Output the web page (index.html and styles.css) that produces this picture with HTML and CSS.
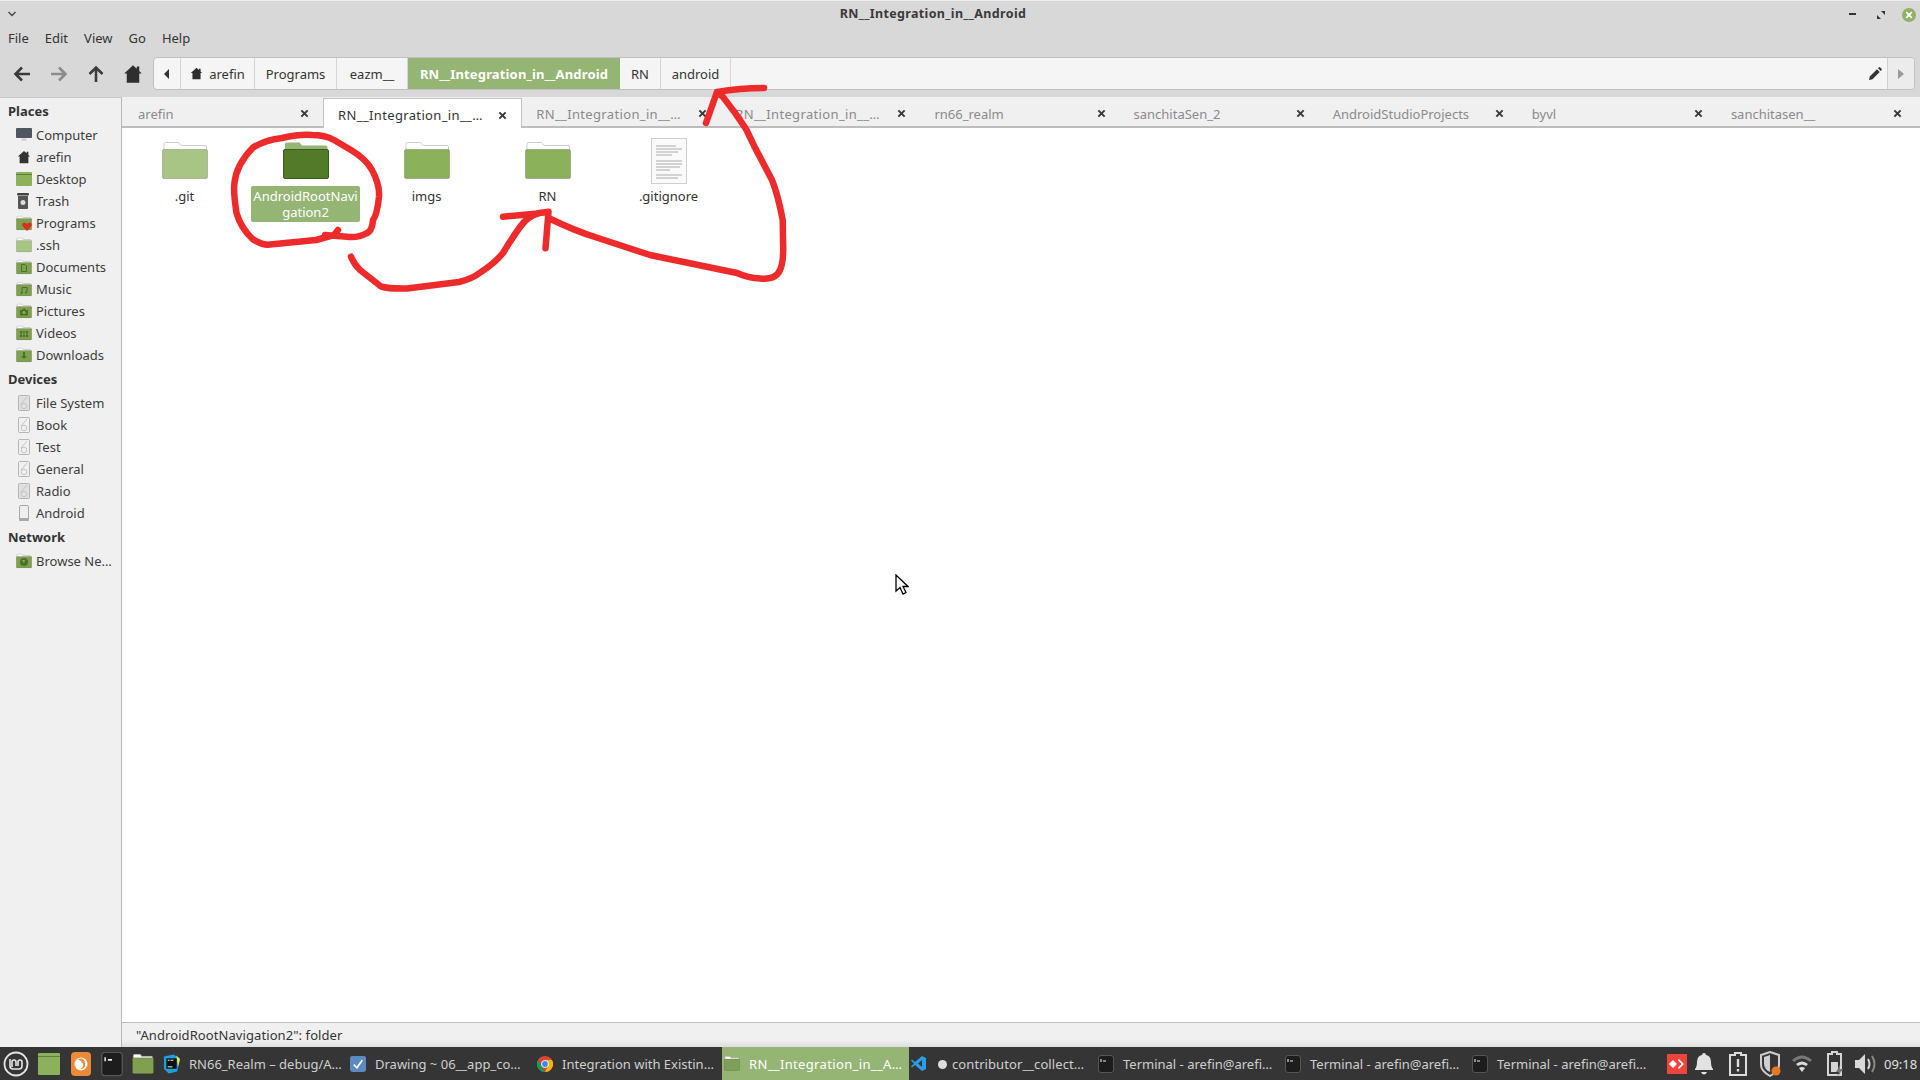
FILE: index.html
```html
<!DOCTYPE html>
<html lang="en">
<head>
<meta charset="utf-8">
<title>RN__Integration_in__Android</title>
<link rel="stylesheet" href="styles.css">
</head>
<body>
<svg class="defs" width="0" height="0" aria-hidden="true">
  <symbol id="folder" viewBox="0 0 46 37">
    <path d="M2 9V2q0-1.500 1.500-1.500h13l2.500 3h24q1.500 0 1.500 1.500v4z" fill="#fff" stroke="#cfcfcf"/>
    <rect x=".5" y="7.500" width="45" height="29" rx="1.500" fill="currentColor" stroke="#00000030"/>
  </symbol>
  <symbol id="sfolder" viewBox="0 0 16 15">
    <path d="M1 5V1.500q0-1 1-1h4l1 1.500h7q1 0 1 1v2z" fill="#fff" stroke="#bdbdbd" stroke-width=".7"/>
    <rect x=".3" y="3" width="15.400" height="11.500" rx="1" fill="currentColor" stroke="#00000030" stroke-width=".6"/>
  </symbol>
  <symbol id="disk" viewBox="0 0 12 16">
    <rect x=".5" y=".5" width="11" height="15" rx="1" fill="currentColor" stroke="#b5b5b5"/>
    <path d="M9 2 3 9" stroke="#c5c5c5" fill="none"/>
    <circle cx="6" cy="11" r="2.800" fill="none" stroke="#c5c5c5"/>
  </symbol>
  <symbol id="term" viewBox="0 0 16 18">
    <rect x=".5" y=".5" width="15" height="17" rx="2.500" fill="#1d1d1d" stroke="#555"/>
    <path d="M3 4v3M5 6h3" stroke="#eee" stroke-width="1.100" fill="none"/>
  </symbol>
  <symbol id="close" viewBox="0 0 10 10">
    <path d="M1.500 1.500l7 7M8.500 1.500l-7 7" stroke="currentColor" stroke-width="2.200" fill="none"/>
  </symbol>
  <symbol id="house" viewBox="0 0 16 16">
    <path d="M8 1 1 7.500h2V15h10V7.500h2l-2-1.900V2h-2v1.700z" fill="currentColor"/>
  </symbol>
</svg>

<div class="window">
  <header class="titlebar">
    <svg class="chev" width="10" height="6" viewBox="0 0 10 6"><path d="M1.500 1 5 4.500 8.500 1" fill="none" stroke="#444" stroke-width="1.300"/></svg>
    <div class="wintitle">RN__Integration_in__Android</div>
    <div class="winbtns">
      <svg width="8" height="3" viewBox="0 0 8 3"><rect width="7" height="2" fill="#333"/></svg>
      <svg width="8" height="8" viewBox="0 0 8 8"><path d="M4 0h4v4zM4 8H0V4z" fill="#333"/></svg>
      <span class="winclose"><svg class="x10" width="8" height="8"><use href="#close"/></svg></span>
    </div>
  </header>
  <nav class="menubar">
    <span>File</span><span>Edit</span><span>View</span><span>Go</span><span>Help</span>
  </nav>
  <div class="toolbar">
    <div class="navbtns">
      <svg width="18" height="18" viewBox="0 0 18 18"><path d="M17 9H3M9 2.500 2.500 9 9 15.500" fill="none" stroke="#3b3b3b" stroke-width="2.600"/></svg>
      <svg width="18" height="18" viewBox="0 0 18 18"><path d="M1 9h14M9 2.500 15.500 9 9 15.500" fill="none" stroke="#8c8c8c" stroke-width="2.600"/></svg>
      <svg width="18" height="18" viewBox="0 0 18 18"><path d="M9 17V3M2.500 9 9 2.500 15.500 9" fill="none" stroke="#3b3b3b" stroke-width="2.600"/></svg>
      <svg class="homebtn" width="20" height="20"><use href="#house"/></svg>
    </div>
    <div class="pathbar">
      <div class="seg seg-back"><svg width="6" height="10" viewBox="0 0 6 10"><path d="M5 0v10L0 5z" fill="#333"/></svg></div>
      <div class="seg seg-home"><svg class="pathhome" width="13" height="13"><use href="#house"/></svg>arefin</div>
      <div class="seg seg-programs">Programs</div>
      <div class="seg seg-eazm">eazm__</div>
      <div class="seg seg-cur">RN__Integration_in__Android</div>
      <div class="seg seg-rn">RN</div>
      <div class="seg seg-android">android</div>
      <div class="pathfill"><svg width="13" height="13" viewBox="0 0 13 13"><path d="M0 13l.8-3.500L8 2.300 10.700 5 3.500 12.200zM9 1.300 10 .3q.5-.4 1 0l1.700 1.700q.4.500 0 1L11.700 4z" fill="#333"/></svg></div>
      <div class="seg-next"><svg width="6" height="10" viewBox="0 0 6 10"><path d="M0 0v10l6-5z" fill="#9a9a9a"/></svg></div>
    </div>
  </div>

  <div class="body">
    <aside class="sidebar">
      <h3 class="sidehead">Places</h3>
      <ul class="sidelist">
        <li><svg class="si" width="16" height="16" viewBox="0 0 16 16"><rect y="1" width="16" height="10" rx="1" fill="#4f5661"/><path d="M5 14h6l-1-3H6z" fill="#d5d5d5"/></svg>Computer</li>
        <li><svg class="si dark" width="14" height="14"><use href="#house"/></svg>arefin</li>
        <li><svg class="si" width="16" height="14" viewBox="0 0 16 14"><rect width="16" height="14" rx="1" fill="#8cb15b"/><rect y="2" width="16" height="1" fill="#5f8036"/></svg>Desktop</li>
        <li><svg class="si" width="14" height="16" viewBox="0 0 14 16"><rect x="1" y="0" width="12" height="2.500" rx="1" fill="#444"/><path d="M2 3h10v12q0 1-1 1H3q-1 0-1-1z" fill="#555"/><circle cx="7" cy="9.500" r="2.500" fill="#ddd"/></svg>Trash</li>
        <li class="rel"><svg class="si green" width="16" height="15"><use href="#sfolder"/></svg><svg class="heart" width="10" height="9" viewBox="0 0 10 9"><path d="M5 9 .5 4Q-.5 1 2 .5q2-.3 3 1.500 1-1.800 3-1.500Q10.500 1 9.500 4z" fill="#d8301f"/></svg>Programs</li>
        <li><svg class="si lgreen" width="16" height="15"><use href="#sfolder"/></svg>.ssh</li>
        <li><span class="folderwrap"><svg class="si green" width="16" height="15"><use href="#sfolder"/></svg><svg class="emblem" width="8" height="8" viewBox="0 0 8 8"><path d="M1.500.5h3.500l1.500 1.500v5.500h-5z" fill="none" stroke="#4f6f2c"/></svg></span>Documents</li>
        <li><span class="folderwrap"><svg class="si green" width="16" height="15"><use href="#sfolder"/></svg><svg class="emblem" width="8" height="8" viewBox="0 0 8 8"><path d="M2 7V1.500h5V6" fill="none" stroke="#4f6f2c"/><circle cx="1.500" cy="7" r="1" fill="#4f6f2c"/><circle cx="6" cy="6.500" r="1" fill="#4f6f2c"/></svg></span>Music</li>
        <li><span class="folderwrap"><svg class="si green" width="16" height="15"><use href="#sfolder"/></svg><svg class="emblem" width="8" height="8" viewBox="0 0 8 8"><path d="M0 2h2l1-1.500h2L6 2h2v5.500H0z" fill="#4f6f2c"/><circle cx="4" cy="4.500" r="1.500" fill="#8cb15b"/></svg></span>Pictures</li>
        <li><span class="folderwrap"><svg class="si green" width="16" height="15"><use href="#sfolder"/></svg><svg class="emblem" width="8" height="8" viewBox="0 0 8 8"><path d="M0 1h8v6H0z" fill="#4f6f2c"/><path d="M2.700 1v6M5.300 1v6M0 4h8" stroke="#8cb15b" stroke-width=".7"/></svg></span>Videos</li>
        <li><span class="folderwrap"><svg class="si green" width="16" height="15"><use href="#sfolder"/></svg><svg class="emblem" width="8" height="8" viewBox="0 0 8 8"><path d="M3 0h2v4h2L4 7 1 4h2z" fill="#4f6f2c"/></svg></span>Downloads</li>
      </ul>
      <h3 class="sidehead">Devices</h3>
      <ul class="sidelist">
        <li><svg class="si disk dim" width="12" height="16"><use href="#disk"/></svg>File System</li>
        <li><svg class="si disk" width="12" height="16"><use href="#disk"/></svg>Book</li>
        <li><svg class="si disk" width="12" height="16"><use href="#disk"/></svg>Test</li>
        <li><svg class="si disk" width="12" height="16"><use href="#disk"/></svg>General</li>
        <li><svg class="si disk dim" width="12" height="16"><use href="#disk"/></svg>Radio</li>
        <li><svg class="si phone" width="10" height="16" viewBox="0 0 10 16"><rect x=".5" y=".5" width="9" height="15" rx="1.500" fill="#eee" stroke="#a8a8a8"/><rect y="13" width="10" height="3" rx="1" fill="#a8a8a8"/></svg>Android</li>
      </ul>
      <h3 class="sidehead">Network</h3>
      <ul class="sidelist">
        <li><span class="folderwrap"><svg class="si green" width="16" height="15"><use href="#sfolder"/></svg><svg class="emblem" width="8" height="8" viewBox="0 0 8 8"><circle cx="4" cy="4" r="4" fill="#4f6f2c"/><path d="M2 2h3l-1 3z" fill="#8cb15b"/></svg></span>Browse Ne…</li>
      </ul>
    </aside>

    <main class="content">
      <div class="tabs">
        <div class="tab"><span>arefin</span><svg class="tabx" width="9" height="9"><use href="#close"/></svg></div>
        <div class="tab active"><span class="us">RN__Integration_in__…</span><svg class="tabx" width="9" height="9"><use href="#close"/></svg></div>
        <div class="tab"><span class="us">RN__Integration_in__…</span><svg class="tabx" width="9" height="9"><use href="#close"/></svg></div>
        <div class="tab"><span class="us">RN__Integration_in__…</span><svg class="tabx" width="9" height="9"><use href="#close"/></svg></div>
        <div class="tab"><span>rn66_realm</span><svg class="tabx" width="9" height="9"><use href="#close"/></svg></div>
        <div class="tab"><span>sanchitaSen_2</span><svg class="tabx" width="9" height="9"><use href="#close"/></svg></div>
        <div class="tab"><span>AndroidStudioProjects</span><svg class="tabx" width="9" height="9"><use href="#close"/></svg></div>
        <div class="tab"><span>byvl</span><svg class="tabx" width="9" height="9"><use href="#close"/></svg></div>
        <div class="tab"><span>sanchitasen__</span><svg class="tabx" width="9" height="9"><use href="#close"/></svg></div>
      </div>
      <div class="files">
        <div class="file"><div class="ficon"><svg class="f-light" width="46" height="37"><use href="#folder"/></svg></div><div class="flabel">.git</div></div>
        <div class="file sel"><div class="ficon"><svg class="f-sel" width="46" height="37" viewBox="0 0 46 37"><path d="M2 9V2q0-1.500 1.500-1.500h13l2.500 3h24q1.500 0 1.500 1.500v4z" fill="#94b573"/><rect x=".5" y="7.500" width="45" height="29" rx="1.500" fill="#517b28" stroke="#3c5c1d"/></svg></div><div class="flabel">AndroidRootNavi<br>gation2</div></div>
        <div class="file"><div class="ficon"><svg class="f-mid" width="46" height="37"><use href="#folder"/></svg></div><div class="flabel">imgs</div></div>
        <div class="file"><div class="ficon"><svg class="f-mid" width="46" height="37"><use href="#folder"/></svg></div><div class="flabel">RN</div></div>
        <div class="file"><div class="ficon"><svg width="36" height="46" viewBox="0 0 36 46"><rect x=".5" y=".5" width="35" height="45" fill="#fafafa" stroke="#cfcfcf"/><path d="M5 8h20M5 11h26M5 14h22M5 17h16M5 23h26M5 26h26M5 29h24M5 32h14M5 37h26M5 40h22" stroke="#aaa" stroke-width="1"/></svg></div><div class="flabel">.gitignore</div></div>
      </div>
      <div class="status">"AndroidRootNavigation2": folder</div>
    </main>
  </div>

  <footer class="taskbar">
    <div class="launchers">
      <svg width="26" height="26" viewBox="0 0 26 26"><circle cx="13" cy="13" r="11.500" fill="none" stroke="#e6e6e6" stroke-width="1.800"/><path d="M7 8v7q0 3 3 3h6q3 0 3-3v-4q0-2-2-2t-2 2v4M13 15v-4q0-2-2-2t-2 2v5" fill="none" stroke="#e6e6e6" stroke-width="1.600"/></svg>
      <svg width="22" height="22" viewBox="0 0 22 22"><rect width="22" height="22" rx="1" fill="#8cb15b"/><rect y="3" width="22" height="1" fill="#5f8036"/></svg>
      <svg width="22" height="24" viewBox="0 0 22 24"><rect width="20" height="24" x="1" rx="4" fill="#ee8a35"/><circle cx="11" cy="12" r="6.500" fill="#fff"/><path d="M8 7q6-2 7 4t-5 6q4-2 3-5t-5-5z" fill="#ee8a35"/></svg>
      <svg width="22" height="26" viewBox="0 0 16 18"><use href="#term"/></svg>
      <svg width="22" height="22" viewBox="0 0 16 15" class="green"><use href="#sfolder"/></svg>
    </div>
    <div class="tasks">
      <div class="task"><svg width="17" height="20" viewBox="0 0 18 20"><path d="M1 2 11 0l7 4-3 14-9 2-5-5z" fill="#1fa0dc"/><path d="M14 1l4 4-2 8z" fill="#f4e34a"/><rect x="3.500" y="4" width="11" height="11" fill="#111"/><path d="M5 6h2M8 6h3M5 13h5" stroke="#fff"/></svg><span>RN66_Realm – debug/A…</span></div>
      <div class="task"><svg width="16" height="16" viewBox="0 0 15 15"><rect width="15" height="15" rx="2" fill="#5b8ac0"/><path d="M3.500 8l3 3 5-7" fill="none" stroke="#fff" stroke-width="1.600"/></svg><span>Drawing ~ 06__app_co…</span></div>
      <div class="task"><svg width="16" height="16" viewBox="0 0 16 16"><circle cx="8" cy="8" r="8" fill="#db4437"/><path d="M8 16 A8 8 0 0 1 1 4l4 7z" fill="#0f9d58"/><path d="M8 16A8 8 0 0 0 15 4H8l3 6z" fill="#f4b400"/><circle cx="8" cy="8" r="3.800" fill="#fff"/><circle cx="8" cy="8" r="2.900" fill="#4285f4"/></svg><span>Integration with Existin…</span></div>
      <div class="task current"><svg class="lg2" width="16" height="15"><use href="#sfolder"/></svg><span class="us">RN__Integration_in__A…</span></div>
      <div class="task"><svg width="15" height="15" viewBox="0 0 15 15"><path d="M11 0 15 2v11l-4 2-7-6-3 2.500L0 10.500 3 7.500 0 4.500 1 3.500 4 6zM11 4 7 7.500l4 3.500z" fill="#2b9fe6"/></svg><span class="unsaved"><i class="dot"></i>contributor__collect…</span></div>
      <div class="task"><svg width="16" height="18"><use href="#term"/></svg><span>Terminal - arefin@arefi…</span></div>
      <div class="task"><svg width="16" height="18"><use href="#term"/></svg><span>Terminal - arefin@arefi…</span></div>
      <div class="task"><svg width="16" height="18"><use href="#term"/></svg><span>Terminal - arefin@arefi…</span></div>
    </div>
    <div class="tray">
      <svg width="20" height="20" viewBox="0 0 20 20"><rect width="20" height="20" fill="#ef443b"/><path d="M6 6l4 4-4 4-4-4zM12 5l5 5-5 5-1.200-1.200L14.600 10l-3.800-3.800z" fill="#fff"/></svg>
      <svg width="18" height="22" viewBox="0 0 18 22"><path d="M9 0q2 0 2 2 5 1 5 7 0 5 2 7v1H0v-1q2-2 2-7 0-6 5-7 0-2 2-2zM6 19h6q-1 2.500-3 2.500T6 19z" fill="#e2e2e2"/></svg>
      <svg width="20" height="24" viewBox="0 0 20 24"><path d="M7 3V1h6v2h5v20H2V3z" fill="none" stroke="#dcdcdc" stroke-width="2"/><path d="M10 7v8M10 17v2.500" stroke="#dcdcdc" stroke-width="2.400"/></svg>
      <svg width="22" height="26" viewBox="0 0 22 26"><path d="M11 1 20 4v10q0 6-9 11Q2 20 2 14V4z" fill="none" stroke="#cfcfcf" stroke-width="2"/><path d="M11 4v17Q5 18 5 13V6z" fill="#cfcfcf"/><circle cx="17" cy="20" r="4.500" fill="#e87722"/></svg>
      <svg width="22" height="20" viewBox="0 0 22 20"><path d="M1 6q10-9 20 0l-2 2Q11 1 3 8z" fill="#777"/><path d="M5 10q6-5 12 0l-2 2q-4-3-8 0z" fill="#ddd"/><path d="M8 14q3-2 6 0l-3 4z" fill="#ddd"/></svg>
      <svg width="18" height="26" viewBox="0 0 18 26"><path d="M6 3V1h5v2h4v21H2V3z" fill="none" stroke="#d5d5d5" stroke-width="2"/><rect x="5" y="11" width="7" height="10" fill="#d5d5d5"/><path d="M14 14l-4 7h3l-2 5 6-8h-3z" fill="#777"/></svg>
      <svg width="22" height="22" viewBox="0 0 22 22"><path d="M0 7h4l6-6v20l-6-6H0z" fill="#d8d8d8"/><path d="M13 6q3 5 0 10" fill="none" stroke="#d8d8d8" stroke-width="2"/><path d="M17 3q5 8 0 16" fill="none" stroke="#8a8a8a" stroke-width="2"/></svg>
      <span class="clock">09:18</span>
    </div>
  </footer>
</div>

<svg class="ink" width="1920" height="1080" viewBox="0 0 1920 1080" aria-hidden="true">
  <path d="M338 230L334 235L316 240L270 244.500Q262 245.500 252 238.500Q241 228 236.500 213Q233 190 234.500 183Q236 165 253 147.500Q265 140 282 138Q300 134 312 135Q325 135 334 140L351 150Q366 159 372 170Q380 185 379 197Q377 215 373 220Q372 232 366 233.500Q358 238 347 236.700L325 235"/>
  <path d="M351 256.700Q354 264 360 270L381 286.500Q390 289 407 288.500L459 282Q472 279 481 272Q495 263 503 253Q512 238 520 227Q528 216 538 213.500L503 216.700M538 213.300L548.500 211.700L545.500 248.300"/>
  <path d="M548.500 218Q575 231 598 238L650 255L737 273Q748 278 760 278.500Q776 280 780 270Q784 262 783 240L782.700 220Q778 195 772 180L754.500 146.700L746 129Q735 112 723 97L717 92Q740 88 764 88M717 92L706 123"/>
</svg>
<svg class="cursor" width="14" height="22" viewBox="0 0 14 22" aria-hidden="true"><path d="M1 1v16l4-3.500L8 20l3-1.500-3-6h5z" fill="#fff" stroke="#000" stroke-width="1.300"/></svg>
</body>
</html>
```
FILE: styles.css
```css
* { box-sizing: border-box; }
html, body { margin: 0; height: 100%; }
body { font-family: "Noto Sans", "Liberation Sans", sans-serif; font-size: 13px; color: #333; overflow: hidden; position: relative; }
.defs { position: absolute; }
svg { display: block; flex: none; }
.window { display: flex; flex-direction: column; width: 1920px; height: 1080px; background: #fff; }

.titlebar { height: 28px; background: #d8d8d8; border-top: 1px solid #eee; display: flex; align-items: center; padding-left: 7px; padding-bottom: 2px; }
.wintitle { flex: 1; text-align: center; font-weight: 700; font-size: 12.500px; letter-spacing: .35px; color: #3a3a3a; }
.winbtns { display: flex; align-items: center; gap: 20px; padding-right: 4px; padding-top: 2px; }
.winclose { width: 14px; height: 14px; margin-left: -3px; border-radius: 50%; background: #8eb463; display: flex; align-items: center; justify-content: center; color: #fff; }

.menubar { height: 24px; background: #d8d8d8; display: flex; align-items: center; gap: 16px; padding-left: 8px; padding-bottom: 4px; font-size: 13px; }

.toolbar { height: 45px; background: #d8d8d8; display: flex; align-items: flex-start; padding-top: 5px; border-bottom: 1px solid #d8d8d8; }
.navbtns { width: 153px; height: 33px; display: flex; align-items: center; gap: 19px; padding-left: 13px; }
.homebtn { color: #2e2e2e; margin-left: -1px; }
.pathbar { width: 1762px; height: 33px; display: flex; align-items: stretch; background: #f5f5f5; border: 1px solid #c0c0c0; border-radius: 4px; font-size: 13px; }
.seg { display: flex; align-items: center; justify-content: center; gap: 6px; border-right: 1px solid #d5d5d5; flex: none; }
.seg-back { width: 27px; }
.seg-home { width: 74px; }
.seg-programs { width: 82px; }
.seg-eazm { width: 71px; }
.seg-cur { width: 212px; background: #94b573; color: #fff; font-weight: 700; letter-spacing: .15px; border-right: 0; }
.seg-rn { width: 41px; }
.seg-android { width: 70px; }
.pathhome { color: #2e2e2e; }
.pathfill { flex: 1; display: flex; align-items: center; justify-content: flex-end; padding-right: 5px; }
.seg-next { width: 27px; display: flex; align-items: center; justify-content: center; border-left: 1px solid #d0d0d0; background: #ececec; border-radius: 0 4px 4px 0; }

.body { flex: 1; display: flex; min-height: 0; }
.sidebar { width: 122px; flex: none; background: #f0f0f0; border-right: 1px solid #b8b8b8; border-top: 1px solid #c8c8c8; padding-top: 2px; font-size: 13px; }
.sidehead { margin: 0; height: 22px; line-height: 22px; padding-left: 8px; font-size: 13px; font-weight: 700; color: #333; }
.sidelist { list-style: none; margin: 0 0 2px; padding: 2px 0 0; }
.sidelist li { height: 22px; display: flex; align-items: center; position: relative; padding-left: 36px; white-space: nowrap; color: #3c3c3c; }
.si { position: absolute; left: 16px; top: 50%; transform: translateY(-50%); }
.si.disk { left: 18px; color: #f0f0f0; }
.si.disk.dim { color: #e0e0e0; }
.si.phone { left: 19px; }
.dark { left: 17px; color: #333; }
.green { color: #7ea04f; }
.lgreen { color: #a9c585; }
.heart { position: absolute; left: 22px; top: 10px; }
.folderwrap { position: static; }
.emblem { position: absolute; left: 20px; top: 8px; }

.content { flex: 1; min-width: 0; display: flex; flex-direction: column; }
.tabs { height: 31px; display: grid; grid-template-columns: repeat(9, 1fr); background: #f0f0f0; border-bottom: 2px solid #bdbdbd; padding: 1px 4px 0 2px; }
.tab { display: flex; align-items: center; justify-content: space-between; padding: 3px 14px 0 14px; color: #8a8a8a; white-space: nowrap; font-size: 13px; background: #f0f0f0; overflow: hidden; }
.tab.active { background: #fff; color: #333; border: 1px solid #c4c4c4; border-bottom: 0; margin-bottom: -2px; }
.us { letter-spacing: .35px; }
.tabx { color: #3a3a3a; }
.files { flex: 1; display: flex; align-items: flex-start; padding: 8px 0 0 2px; background: #fff; }
.file { width: 121px; display: flex; flex-direction: column; align-items: center; }
.ficon { height: 50px; display: flex; align-items: center; justify-content: center; padding-bottom: 1px; }
.flabel { margin-top: 0; padding: 2px 0; width: 109px; text-align: center; line-height: 16px; border-radius: 2px; color: #333; font-size: 13px; }
.sel .flabel { background: #94b573; color: #fff; }
.f-light { color: #a9c585; }
.f-mid { color: #8cb15b; }
.status { height: 25px; flex: none; background: linear-gradient(#f0f0f0 70%, #dedede); border-top: 1px solid #bdbdbd; padding-left: 14px; line-height: 24px; font-size: 13px; letter-spacing: .08px; color: #333; }

.taskbar { height: 33px; flex: none; background: #353535; display: flex; align-items: center; color: #cfcfcf; font-size: 13px; }
.launchers { width: 161px; flex: none; height: 33px; display: flex; align-items: center; justify-content: space-between; padding: 0 7px 0 3px; }
.tasks { display: flex; height: 33px; flex: none; width: 1495px; }
.task { width: 187px; flex: none; display: flex; align-items: center; gap: 9px; padding-left: 2px; white-space: nowrap; overflow: hidden; }
.task.current { background: #94b573; color: #fff; }
.lg2 { color: #7e9f58; }
.unsaved { display: flex; align-items: center; letter-spacing: .08px; }
.dot { width: 9px; height: 9px; border-radius: 50%; background: #ddd; margin: 1px 5px 0 3px; }
.tray { flex: 1; display: flex; align-items: center; padding-left: 11px; }
.tray > :nth-child(2) { margin-left: 8px; }
.tray > :nth-child(3) { margin-left: 15px; }
.tray > :nth-child(4) { margin-left: 11px; }
.tray > :nth-child(5) { margin-left: 10px; }
.tray > :nth-child(6) { margin-left: 13px; }
.tray > :nth-child(7) { margin-left: 11px; }
.clock { margin-left: 7px; color: #e0e0e0; }

.ink { position: absolute; left: 0; top: 0; pointer-events: none; }
.ink path { fill: none; stroke: #ee2b2b; stroke-width: 6.500; stroke-linecap: round; stroke-linejoin: round; }
.cursor { position: absolute; left: 895px; top: 574px; }
```
